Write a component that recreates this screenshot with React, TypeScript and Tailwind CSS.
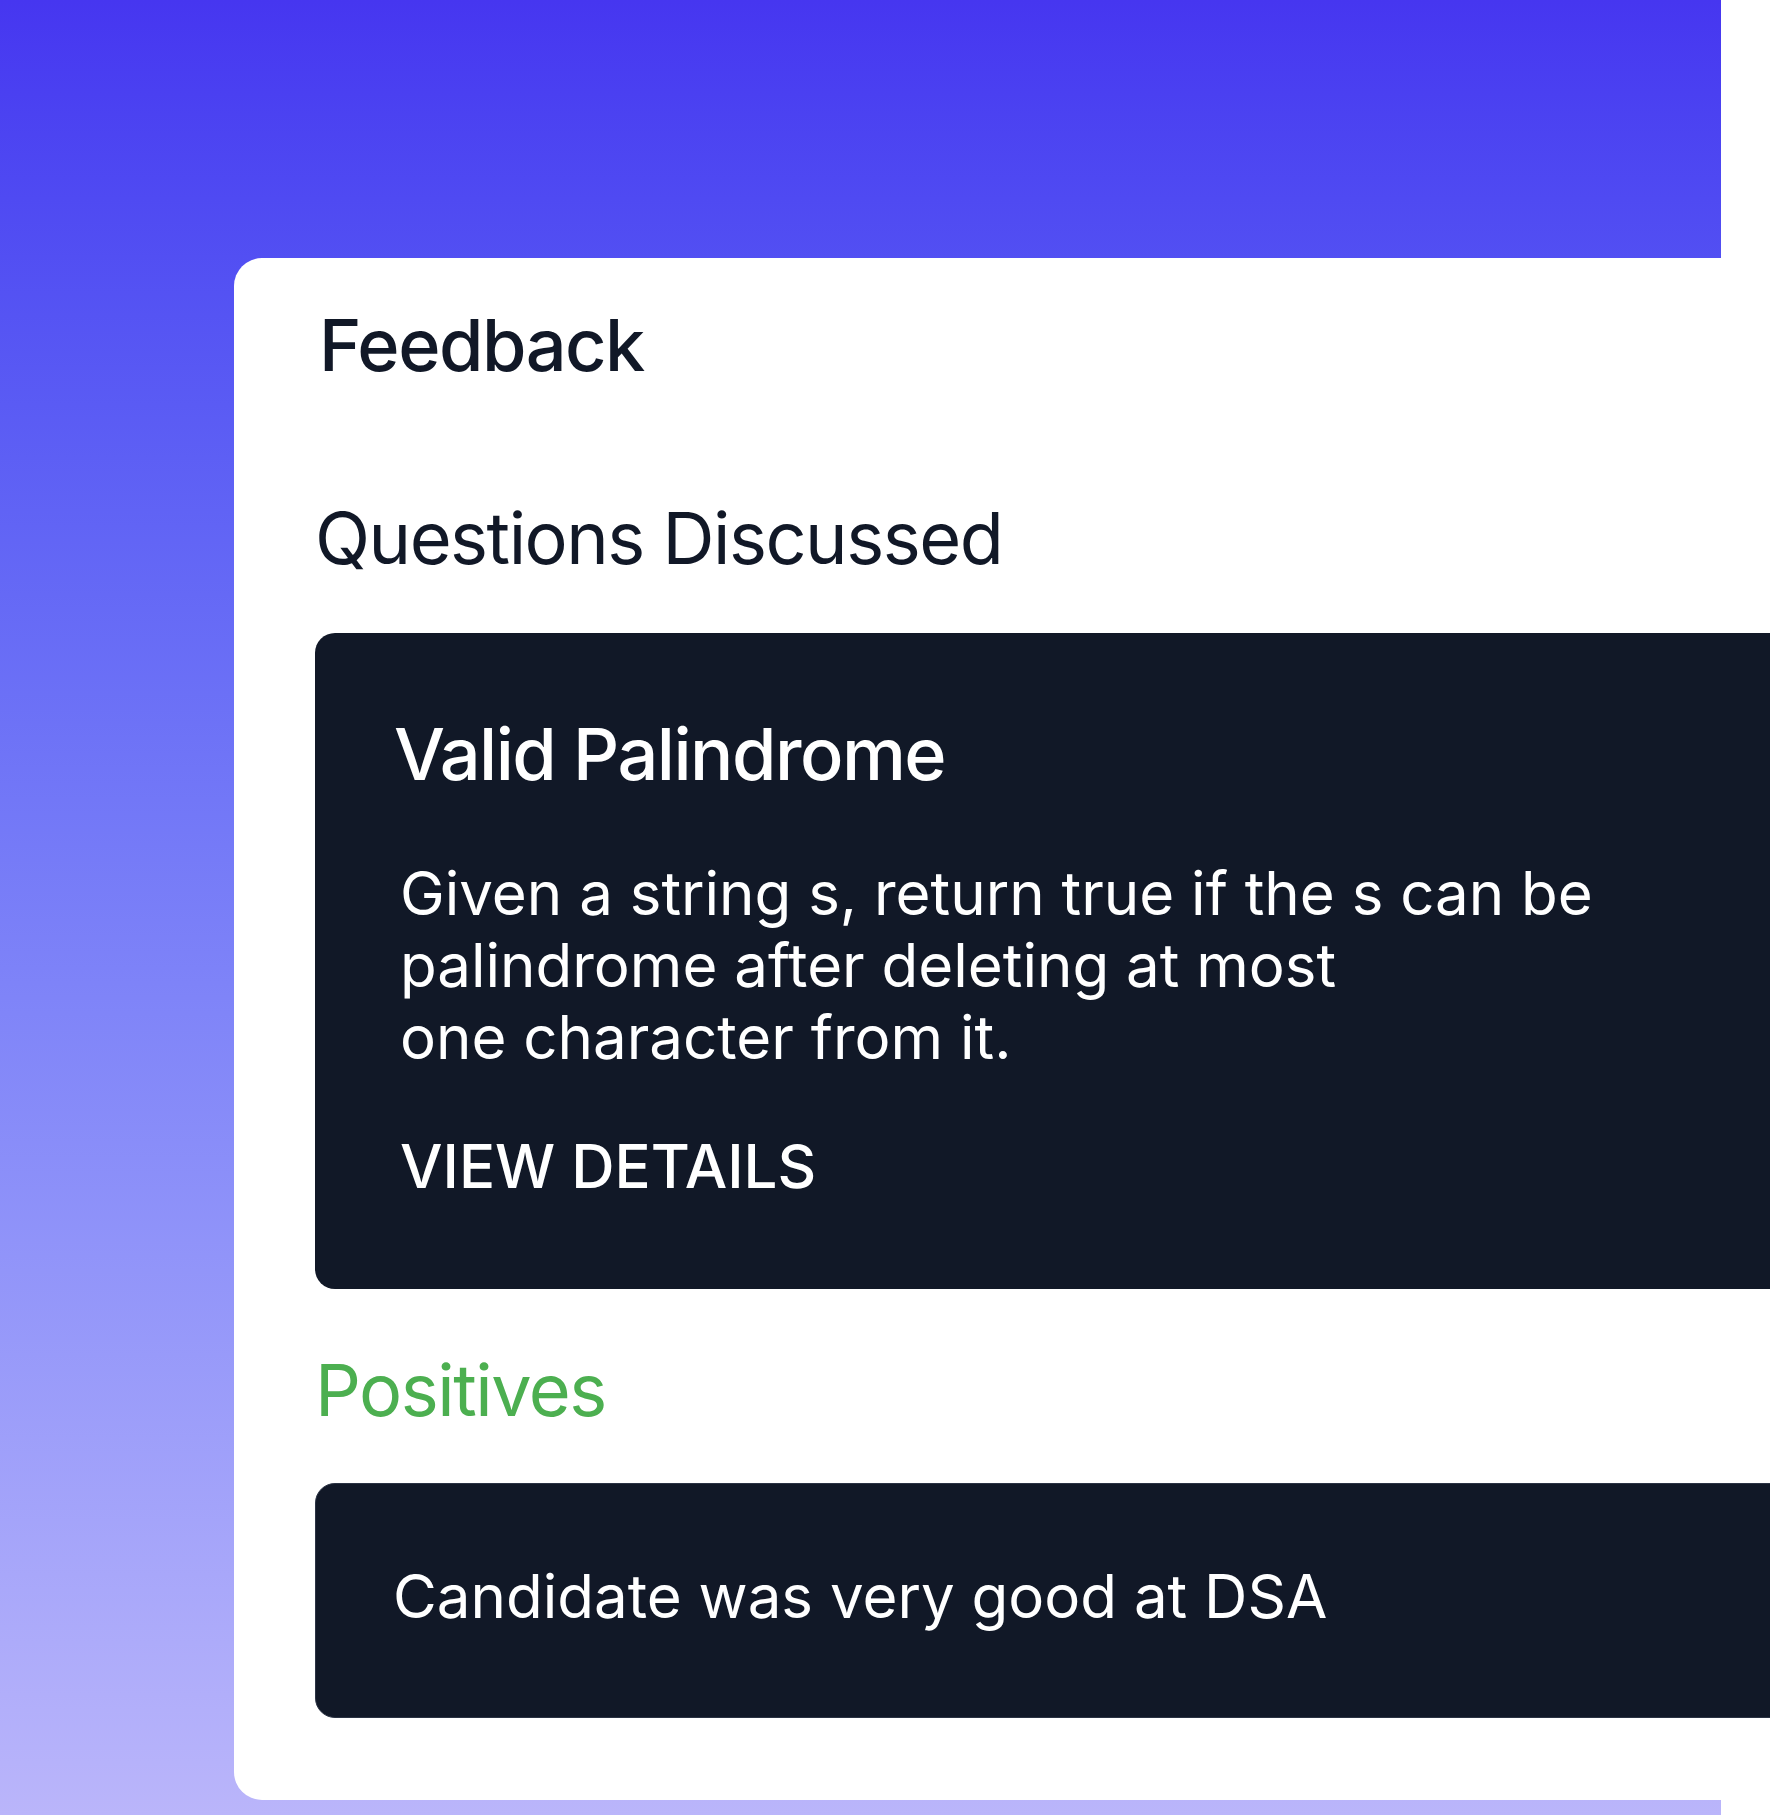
export default function App() {
  return (
    <div className="w-[1770px] h-[1815px] overflow-hidden bg-white font-['Inter',sans-serif]">
      <div className="w-[1721px] h-full bg-gradient-to-b from-[#4636f0] to-[#bab5fa] pl-[234px] pt-[258px]">
        <div className="w-[1800px] h-[1542px] bg-white rounded-[28px] pl-[81px] pt-[51px]">
          <h1 className="ml-[4px] text-[72px] leading-none font-medium tracking-[-1.5px] text-[#111827]">Feedback</h1>

          <h2 className="mt-[121px] text-[72px] leading-none font-normal tracking-[-1.5px] text-[#111827]">
            Questions Discussed
          </h2>

          <div className="mt-[59px] h-[656px] bg-[#111827] rounded-[20px] pl-[85px] pt-[85px] text-white">
            <h3 className="-ml-[6px] text-[72px] leading-none font-medium tracking-[-1.5px]">Valid Palindrome</h3>
            <p className="mt-[67px] text-[60px] leading-[72px] font-normal">
              Given a string s, return true if the s can be
              <br />
              palindrome after deleting at most
              <br />
              one character from it.
            </p>
            <button className="mt-[63px] block text-[60px] leading-none font-medium">VIEW DETAILS</button>
          </div>

          <h2 className="mt-[65px] text-[72px] leading-none font-normal tracking-[-1.5px] text-[#4caf50]">Positives</h2>

          <div className="mt-[57px] h-[235px] bg-[#111827] border border-[#2b3344] rounded-[20px] pl-[77px] pt-[82px] text-white">
            <p className="text-[60px] leading-none font-normal">Candidate was very good at DSA</p>
          </div>
        </div>
      </div>
    </div>
  );
}
